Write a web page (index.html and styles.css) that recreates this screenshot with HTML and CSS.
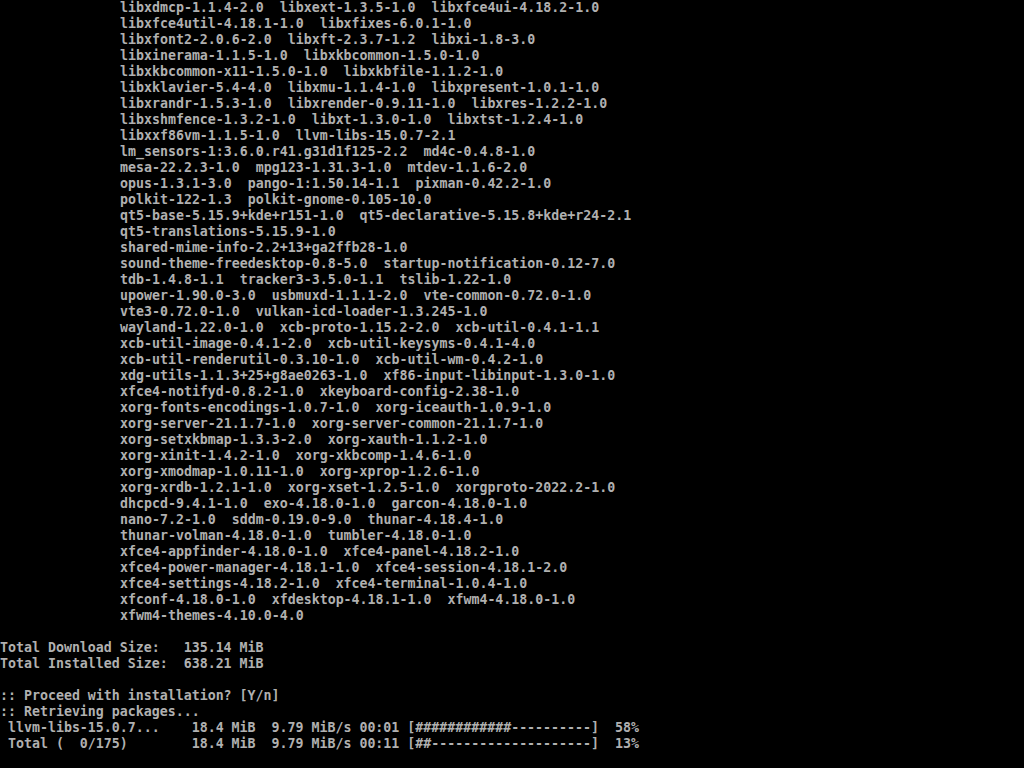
FILE: index.html
```html
<!DOCTYPE html>
<html lang="en">
<head>
    <meta charset="UTF-8">
    <title>tty1</title>
    <link rel="stylesheet" href="styles.css">
</head>
<body>

    <!-- Console output of pacman -S -->
    <pre class="console"><span class="pkg">libxdmcp-1.1.4-2.0  libxext-1.3.5-1.0  libxfce4ui-4.18.2-1.0
libxfce4util-4.18.1-1.0  libxfixes-6.0.1-1.0
libxfont2-2.0.6-2.0  libxft-2.3.7-1.2  libxi-1.8-3.0
libxinerama-1.1.5-1.0  libxkbcommon-1.5.0-1.0
libxkbcommon-x11-1.5.0-1.0  libxkbfile-1.1.2-1.0
libxklavier-5.4-4.0  libxmu-1.1.4-1.0  libxpresent-1.0.1-1.0
libxrandr-1.5.3-1.0  libxrender-0.9.11-1.0  libxres-1.2.2-1.0
libxshmfence-1.3.2-1.0  libxt-1.3.0-1.0  libxtst-1.2.4-1.0
libxxf86vm-1.1.5-1.0  llvm-libs-15.0.7-2.1
lm_sensors-1:3.6.0.r41.g31d1f125-2.2  md4c-0.4.8-1.0
mesa-22.2.3-1.0  mpg123-1.31.3-1.0  mtdev-1.1.6-2.0
opus-1.3.1-3.0  pango-1:1.50.14-1.1  pixman-0.42.2-1.0
polkit-122-1.3  polkit-gnome-0.105-10.0
qt5-base-5.15.9+kde+r151-1.0  qt5-declarative-5.15.8+kde+r24-2.1
qt5-translations-5.15.9-1.0
shared-mime-info-2.2+13+ga2ffb28-1.0
sound-theme-freedesktop-0.8-5.0  startup-notification-0.12-7.0
tdb-1.4.8-1.1  tracker3-3.5.0-1.1  tslib-1.22-1.0
upower-1.90.0-3.0  usbmuxd-1.1.1-2.0  vte-common-0.72.0-1.0
vte3-0.72.0-1.0  vulkan-icd-loader-1.3.245-1.0
wayland-1.22.0-1.0  xcb-proto-1.15.2-2.0  xcb-util-0.4.1-1.1
xcb-util-image-0.4.1-2.0  xcb-util-keysyms-0.4.1-4.0
xcb-util-renderutil-0.3.10-1.0  xcb-util-wm-0.4.2-1.0
xdg-utils-1.1.3+25+g8ae0263-1.0  xf86-input-libinput-1.3.0-1.0
xfce4-notifyd-0.8.2-1.0  xkeyboard-config-2.38-1.0
xorg-fonts-encodings-1.0.7-1.0  xorg-iceauth-1.0.9-1.0
xorg-server-21.1.7-1.0  xorg-server-common-21.1.7-1.0
xorg-setxkbmap-1.3.3-2.0  xorg-xauth-1.1.2-1.0
xorg-xinit-1.4.2-1.0  xorg-xkbcomp-1.4.6-1.0
xorg-xmodmap-1.0.11-1.0  xorg-xprop-1.2.6-1.0
xorg-xrdb-1.2.1-1.0  xorg-xset-1.2.5-1.0  xorgproto-2022.2-1.0
dhcpcd-9.4.1-1.0  exo-4.18.0-1.0  garcon-4.18.0-1.0
nano-7.2-1.0  sddm-0.19.0-9.0  thunar-4.18.4-1.0
thunar-volman-4.18.0-1.0  tumbler-4.18.0-1.0
xfce4-appfinder-4.18.0-1.0  xfce4-panel-4.18.2-1.0
xfce4-power-manager-4.18.1-1.0  xfce4-session-4.18.1-2.0
xfce4-settings-4.18.2-1.0  xfce4-terminal-1.0.4-1.0
xfconf-4.18.0-1.0  xfdesktop-4.18.1-1.0  xfwm4-4.18.0-1.0
xfwm4-themes-4.10.0-4.0</span>
Total Download Size:   135.14 MiB
Total Installed Size:  638.21 MiB

:: Proceed with installation? [Y/n]
:: Retrieving packages...
 llvm-libs-15.0.7...    18.4 MiB  9.79 MiB/s 00:01 [############----------]  58%
 Total (  0/175)        18.4 MiB  9.79 MiB/s 00:11 [##--------------------]  13%
</pre>

</body>
</html>
```

FILE: styles.css
```css
body {
    margin: 0;
    padding: 0;
    background-color: #000; /* plain tty */
    color: #b0b0b0;
    height: 100vh;
    overflow: hidden;
}

/* 80x48 text console, 8x16 cells */
.console {
    margin: 0;
    font-family: "DejaVu Sans Mono", monospace;
    font-size: 13.289px;
    font-weight: bold;
    line-height: 16px;
    white-space: pre;
}

/* package list wraps with a 15 column indent */
.pkg {
    display: block;
    padding-left: 120px;
}
```
